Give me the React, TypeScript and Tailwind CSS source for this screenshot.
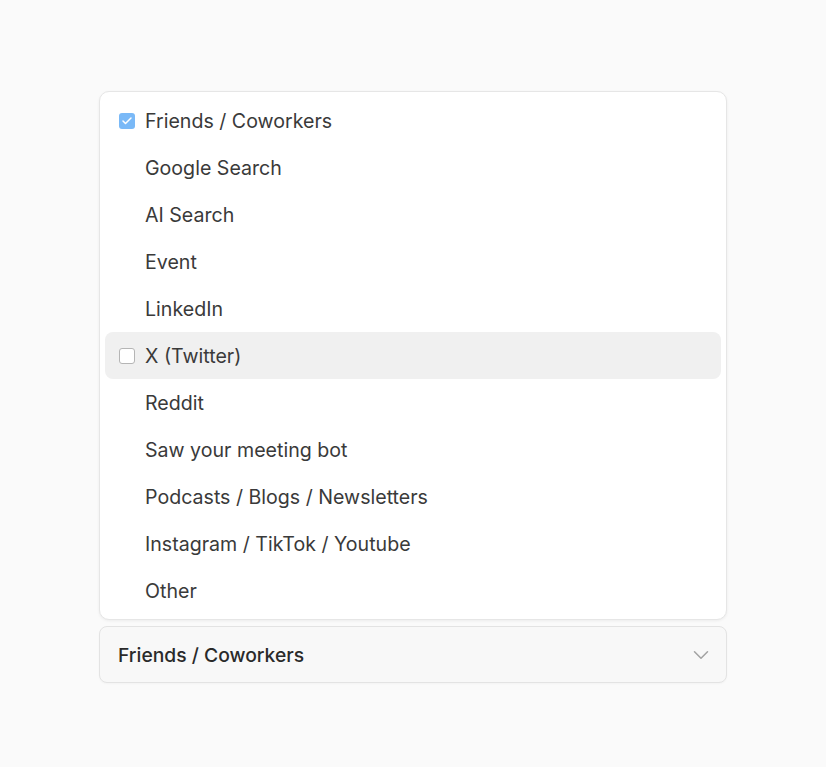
import { Check, ChevronDown } from 'lucide-react'

const options = [
  'Friends / Coworkers',
  'Google Search',
  'AI Search',
  'Event',
  'LinkedIn',
  'X (Twitter)',
  'Reddit',
  'Saw your meeting bot',
  'Podcasts / Blogs / Newsletters',
  'Instagram / TikTok / Youtube',
  'Other',
]

export default function App() {
  const selected = 'Friends / Coworkers'
  const hovered = 'X (Twitter)'

  return (
    <div className="min-h-screen bg-[#fafafa] pt-[91px] font-['Inter',sans-serif]">
      <div className="mx-auto flex w-[628px] flex-col gap-[6px]">
        {/* Options list */}
        <div className="rounded-[10px] border border-[#e6e6e6] bg-white p-[5px] shadow-[0_1px_3px_rgba(0,0,0,0.06)]">
          {options.map((opt) => {
            const isSelected = opt === selected
            const isHovered = opt === hovered
            return (
              <div
                key={opt}
                className={`flex h-[47px] items-center gap-[10px] rounded-[8px] pl-[14px] text-[19.6px] text-[#3a3a3a] ${
                  isHovered ? 'bg-[#f0f0f0]' : ''
                }`}
              >
                {isSelected ? (
                  <span className="flex h-4 w-4 items-center justify-center rounded-[3px] bg-[#7ab9f7]">
                    <Check className="h-3 w-3 text-white" strokeWidth={3} />
                  </span>
                ) : isHovered ? (
                  <span className="h-4 w-4 rounded-[3px] border border-[#b5b5b5] bg-white" />
                ) : (
                  <span className="h-4 w-4" />
                )}
                <span className="pt-[2px]">{opt}</span>
              </div>
            )
          })}
        </div>

        {/* Select trigger */}
        <div className="flex h-[57px] items-center justify-between rounded-[8px] border border-[#e3e3e3] bg-[#f8f8f8] pl-[18px] pr-[12px] shadow-[0_1px_2px_rgba(0,0,0,0.03)]">
          <span className="pt-[2px] text-[19.3px] font-medium text-[#2a2a2a]">{selected}</span>
          <ChevronDown className="h-[26px] w-[26px] text-[#a3a3a3]" strokeWidth={1.4} />
        </div>
      </div>
    </div>
  )
}
